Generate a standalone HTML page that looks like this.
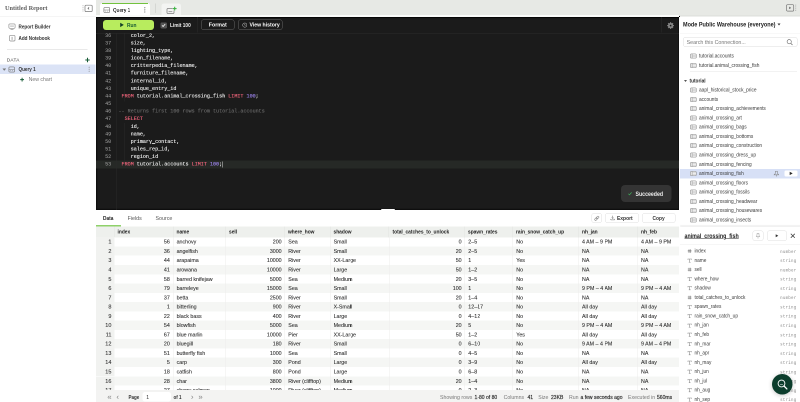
<!DOCTYPE html>
<html><head><meta charset="utf-8"><title>Untitled Report</title>
<style>
*{box-sizing:border-box;margin:0;padding:0}
html,body{width:800px;height:402px;overflow:hidden;background:#fff}
#root{position:absolute;left:0;top:0;width:800px;height:402px;zoom:2;transform:scale(.5);transform-origin:0 0}
#side,#ed,#res,#rp,#topbar,#root>.t,#root>svg{will-change:transform}
body{font-family:"Liberation Sans",sans-serif;font-size:5.2px;color:#333;position:relative}
.abs{position:absolute}
.t{position:absolute;white-space:nowrap;line-height:1}
.m{-webkit-text-stroke:0.14px;transform:scaleX(.97);transform-origin:0 50%}
.b{font-weight:bold;transform:scaleX(.87);transform-origin:0 50%}
/* sidebar */
#side{position:absolute;left:0;top:0;width:96px;height:402px;background:#fff}
#title{left:5px;top:5.2px;font-family:"Liberation Serif",serif;font-size:6.3px;color:#5e5e5e;font-weight:bold;letter-spacing:0}
/* top bar */
#topbar{position:absolute;left:96px;top:0;width:704px;height:16.6px;background:#e7e9e5;border-bottom:1px solid #dcdeda}
#tab1{position:absolute;left:100px;top:3px;width:50px;height:13.3px;background:#fff;border-radius:3px 3px 0 0}
#tab2{position:absolute;left:161.3px;top:3.6px;width:19.8px;height:12.7px;background:#f3f4f2;border-radius:2.5px 2.5px 0 0}
/* editor */
#ed{position:absolute;left:96px;top:16px;width:583.5px;height:194.2px;background:#1b1b1b;overflow:hidden;box-shadow:inset 0 2.1px 0 0 #070707,inset 0 0 0 1.2px #0e0e0e}
#edbar{position:absolute;left:0;top:0;width:584px;height:17.1px;border-bottom:0.6px solid #2c2c2c}
.btn{position:absolute;border:0.6px solid #666;border-radius:2.5px;color:#fff;font-weight:bold;font-size:5.3px;text-align:center}
.cl{position:absolute;left:0;width:584px;height:7.58px;font-family:"Liberation Mono",monospace;font-size:5.08px;line-height:7.58px;color:#f2f2f2;white-space:pre}
.cl .ln{position:absolute;left:0;width:15.2px;text-align:right;color:#a6a6a6;font-size:5.1px}
.cl .tx{position:absolute;left:22.5px;-webkit-text-stroke:0.12px}
k{color:#f4667d}
n{color:#9f86f0}
c{color:#6a6a6a}
/* results */
#res{position:absolute;left:96px;top:210.3px;width:584px;height:192px;background:#fff;overflow:hidden}
.hd{position:absolute;top:16px;height:11px;background:#eef0ed;font-weight:bold;color:#222;font-size:5.2px;line-height:11px;padding-left:3.3px;border-right:0.5px solid #e2e3e1}
.row{position:absolute;left:0;width:584px;height:9.27px;font-size:5.3px;line-height:9.27px;color:#2c2c2c;-webkit-text-stroke:0.08px}
.row.alt{background:#f5f6f4}
.row span{position:absolute;top:0;white-space:nowrap}
.vl{position:absolute;top:26.7px;width:0.5px;height:153px;background:#ececeb}
/* right panel */
#rp{border-left:1px solid #fff;position:absolute;left:679px;top:16.5px;width:121px;height:386px;background:#fff;overflow:hidden}
.ti{position:absolute;left:0;width:120px;height:9.3px;font-size:5.2px;line-height:9.3px;color:#383838}
.ti span{position:absolute;left:18.8px;top:0.2px;white-space:nowrap;transform:scaleX(.922);transform-origin:0 50%}
.ico{position:absolute;left:10.1px;top:2.2px;width:6.7px;height:5px}
.fi{position:absolute;left:0;width:120px;height:9.3px;font-size:5.1px;line-height:9.3px;color:#555}
.fi .nm{position:absolute;left:14.3px;top:0;white-space:nowrap;transform:scaleX(.93);transform-origin:0 50%;color:#3a3a3a}
.fi .ty{position:absolute;right:3.6px;top:0.8px;font-family:"Liberation Mono",monospace;font-size:4.1px;color:#8a8a8a;letter-spacing:0.25px}
.fi .ic{position:absolute;left:7.6px;top:0;font-size:4.6px;color:#888}
</style></head><body><div id="root">

<div id="side">
<div class="t" id="title">Untitled Report</div>
<svg class="abs" style="left:82px;top:4.6px" width="11" height="8" viewBox="0 0 11 8"><line x1="1" y1="0.6" x2="1" y2="7.4" stroke="#999" stroke-width="0.6" stroke-dasharray="1 0.8"/><rect x="3" y="0.7" width="7.2" height="6.4" rx="1" fill="none" stroke="#777" stroke-width="0.7"/><path d="M7.1 2.9 L6 3.9 L7.1 4.9" fill="none" stroke="#555" stroke-width="0.7"/></svg>
<div class="abs" style="left:0;top:16px;width:96px;height:0.6px;background:#ebebeb"></div>
<svg class="abs" style="left:8.6px;top:23.6px" width="7" height="6.4" viewBox="0 0 7 6.4"><rect x="0.4" y="0.4" width="6.2" height="4.4" rx="0.9" fill="none" stroke="#8a8a8a" stroke-width="0.65"/><path d="M1.6 2.6 H5.4 M2 5.8 H5" stroke="#8a8a8a" stroke-width="0.6" fill="none"/></svg>
<div class="t b" style="left:18.7px;top:24px;font-size:5.3px;color:#333">Report Builder</div>
<svg class="abs" style="left:9px;top:35px" width="6.4" height="6.4" viewBox="0 0 6.4 6.4"><rect x="0.4" y="0.4" width="5.6" height="5.6" rx="1" fill="none" stroke="#8a8a8a" stroke-width="0.65"/><path d="M2.3 2.2 H4 M2.3 3.2 H4 M2.3 4.2 H4" stroke="#999" stroke-width="0.5"/></svg>
<div class="t b" style="left:18.7px;top:35.4px;font-size:5.3px;color:#333">Add Notebook</div>
<div class="abs" style="left:7px;top:49.2px;width:80.5px;height:0.6px;background:#e9e9e9"></div>
<div class="t" style="left:6.8px;top:57.7px;font-size:4.7px;color:#444;letter-spacing:0.25px">DATA</div>
<svg class="abs" style="left:84.8px;top:57.3px" width="5" height="5" viewBox="0 0 5 5"><path d="M2.5 0.3 V4.7 M0.3 2.5 H4.7" stroke="#155a35" stroke-width="1.05"/></svg>
<div class="abs" style="left:0;top:64.3px;width:95.6px;height:9.8px;background:#dbe3f6"></div>
<svg class="abs" style="left:2.3px;top:68.3px" width="3.6" height="2.4" viewBox="0 0 3.6 2.4"><path d="M0 0 H3.6 L1.8 2.4 Z" fill="#777"/></svg>
<svg class="abs" style="left:8.6px;top:66.3px" width="6.4" height="6" viewBox="0 0 6.4 6"><rect x="0.4" y="0.4" width="5.6" height="5.2" rx="1" fill="none" stroke="#777" stroke-width="0.65"/><path d="M0.4 3 H6 M2.3 3.6 V4.6 M4.1 3.6 V4.6" stroke="#777" stroke-width="0.5"/></svg>
<div class="t b" style="left:18.6px;top:66.6px;font-size:5.3px;color:#333">Query 1</div>
<svg class="abs" style="left:88.3px;top:66.5px" width="1.4" height="5.6" viewBox="0 0 1.4 5.6"><circle cx="0.7" cy="0.8" r="0.55" fill="#808080"/><circle cx="0.7" cy="2.8" r="0.55" fill="#808080"/><circle cx="0.7" cy="4.8" r="0.55" fill="#808080"/></svg>
<svg class="abs" style="left:19.8px;top:77.3px" width="4.2" height="4.2" viewBox="0 0 4.2 4.2"><path d="M2.1 0.2 V4 M0.2 2.1 H4" stroke="#155a35" stroke-width="0.95"/></svg>
<div class="t" style="left:28.6px;top:77px;font-size:5.2px;color:#777">New chart</div>
</div>
<div id="topbar"></div>
<div id="tab1"></div>
<svg class="abs" style="left:103.6px;top:7.2px" width="6.6" height="6" viewBox="0 0 6.6 6"><rect x="0.4" y="0.4" width="5.8" height="5.2" rx="1" fill="none" stroke="#777" stroke-width="0.65"/><path d="M0.4 3 H6.2 M2.3 3.7 V4.6 M4.3 3.7 V4.6" stroke="#777" stroke-width="0.5"/></svg>
<div class="t b" style="left:113px;top:7.3px;font-size:5.3px;color:#333">Query 1</div>
<svg class="abs" style="left:144px;top:7px" width="1.4" height="5.8" viewBox="0 0 1.4 5.8"><circle cx="0.7" cy="0.8" r="0.55" fill="#666"/><circle cx="0.7" cy="2.9" r="0.55" fill="#666"/><circle cx="0.7" cy="5" r="0.55" fill="#666"/></svg>
<div class="abs" style="left:155px;top:3.6px;width:0.6px;height:9.2px;background:#c3c5c1"></div>
<div id="tab2"></div>
<svg class="abs" style="left:166.4px;top:6.3px" width="10.4" height="8" viewBox="0 0 10.4 8"><rect x="0.5" y="2" width="7" height="5" rx="1" fill="#f3f4f2" stroke="#7d7d7d" stroke-width="0.75"/><path d="M2 5.2 H5.8" stroke="#7d7d7d" stroke-width="0.7"/><path d="M8.2 0 V4.2 M6.1 2.1 H10.3" stroke="#f3f4f2" stroke-width="2"/><path d="M8.2 0.2 V4 M6.3 2.1 H10.1" stroke="#35b13c" stroke-width="1"/></svg>
<svg class="abs" style="left:786px;top:4.2px" width="11" height="8" viewBox="0 0 11 8"><rect x="0.5" y="0.7" width="7.2" height="6.4" rx="1" fill="none" stroke="#777" stroke-width="0.7"/><path d="M3.5 2.9 L4.7 3.9 L3.5 4.9 Z" fill="#555" stroke="#555" stroke-width="0.4"/><line x1="9.8" y1="0.6" x2="9.8" y2="7.4" stroke="#999" stroke-width="0.6" stroke-dasharray="1 0.8"/></svg>
<div id="ed"><div class="abs" style="left:0;top:0.4px;width:584px;height:194px">
<div id="edbar"></div>
<div class="abs" style="left:0;top:144.26px;width:584px;height:7.6px;background:#262926"></div>
<div class="abs" style="left:20.3px;top:16.5px;width:0.5px;height:178px;background:#2a2a2a"></div>
<div class="abs" style="left:27.8px;top:17px;width:0.5px;height:68px;background:#2a2a2a"></div>
<div class="abs" style="left:27.8px;top:106.36px;width:0.5px;height:37.90px;background:#2a2a2a"></div>
<div class="abs" style="left:6.9px;top:3.5px;width:51.2px;height:10.3px;background:#b8ec5e;border-radius:3px"></div>
<svg class="abs" style="left:24.2px;top:6.2px" width="4" height="4.8" viewBox="0 0 4 4.8"><path d="M0.2 0.2 L3.8 2.4 L0.2 4.6 Z" fill="#123f28"/></svg>
<div class="t b" style="left:31px;top:6.1px;font-size:5.6px;color:#175a34">Run</div>
<div class="abs" style="left:64.3px;top:5.9px;width:6.5px;height:6.3px;background:#555;border-radius:1.2px"></div>
<svg class="abs" style="left:65.5px;top:7.2px" width="4.2" height="3.6" viewBox="0 0 4.2 3.6"><path d="M0.5 1.9 L1.6 3 L3.7 0.6" fill="none" stroke="#fff" stroke-width="0.8"/></svg>
<div class="t b" style="left:74px;top:6.3px;font-size:5.5px;color:#eee">Limit 100</div>
<div class="abs" style="left:101px;top:0;width:0.6px;height:16px;background:#2c2c2c"></div>
<div class="btn" style="left:105px;top:3.2px;width:33.5px;height:10.6px;line-height:9.6px">Format</div>
<div class="btn" style="left:142.2px;top:3.2px;width:44.5px;height:10.6px;line-height:9.6px;text-align:left;padding-left:10.8px;font-size:5.15px">View history</div>
<svg class="abs" style="left:146px;top:6.2px" width="5.2" height="5.2" viewBox="0 0 5.2 5.2"><circle cx="2.8" cy="2.6" r="2.1" fill="none" stroke="#bbb" stroke-width="0.55"/><path d="M2.8 1.4 V2.7 H3.7" fill="none" stroke="#bbb" stroke-width="0.5"/></svg>
<div class="abs" style="left:565.5px;top:0;width:0.6px;height:16px;background:#2c2c2c"></div>
<svg class="abs" style="left:570.8px;top:5.5px" width="7.2" height="7.2" viewBox="0 0 7.2 7.2"><path d="M7.06 3.05 L7.06 4.15 L6.23 4.23 L5.90 5.01 L6.43 5.66 L5.66 6.43 L5.01 5.90 L4.23 6.23 L4.15 7.06 L3.05 7.06 L2.97 6.23 L2.19 5.90 L1.54 6.43 L0.77 5.66 L1.30 5.01 L0.97 4.23 L0.14 4.15 L0.14 3.05 L0.97 2.97 L1.30 2.19 L0.77 1.54 L1.54 0.77 L2.19 1.30 L2.97 0.97 L3.05 0.14 L4.15 0.14 L4.23 0.97 L5.01 1.30 L5.66 0.77 L6.43 1.54 L5.90 2.19 L6.23 2.97 Z" fill="#7d7d7d"/><circle cx="3.6" cy="3.6" r="1.9" fill="none" stroke="#999" stroke-width="0.4"/><circle cx="3.6" cy="3.6" r="0.8" fill="#1b1b1b"/></svg>
<div class="cl" style="top:15.40px"><span class="ln">36</span><span class="tx">    color_2,</span></div>
<div class="cl" style="top:22.98px"><span class="ln">37</span><span class="tx">    size,</span></div>
<div class="cl" style="top:30.56px"><span class="ln">38</span><span class="tx">    lighting_type,</span></div>
<div class="cl" style="top:38.14px"><span class="ln">39</span><span class="tx">    icon_filename,</span></div>
<div class="cl" style="top:45.72px"><span class="ln">40</span><span class="tx">    critterpedia_filename,</span></div>
<div class="cl" style="top:53.30px"><span class="ln">41</span><span class="tx">    furniture_filename,</span></div>
<div class="cl" style="top:60.88px"><span class="ln">42</span><span class="tx">    internal_id,</span></div>
<div class="cl" style="top:68.46px"><span class="ln">43</span><span class="tx">    unique_entry_id</span></div>
<div class="cl" style="top:76.04px"><span class="ln">44</span><span class="tx"> <k>FROM</k> tutorial.animal_crossing_fish <k>LIMIT</k> <n>100</n>;</span></div>
<div class="cl" style="top:83.62px"><span class="ln">45</span><span class="tx"></span></div>
<div class="cl" style="top:91.20px"><span class="ln">46</span><span class="tx"><c>-- Returns first 100 rows from tutorial.accounts</c></span></div>
<div class="cl" style="top:98.78px"><span class="ln">47</span><span class="tx">  <k>SELECT</k></span></div>
<div class="cl" style="top:106.36px"><span class="ln">48</span><span class="tx">    id,</span></div>
<div class="cl" style="top:113.94px"><span class="ln">49</span><span class="tx">    name,</span></div>
<div class="cl" style="top:121.52px"><span class="ln">50</span><span class="tx">    primary_contact,</span></div>
<div class="cl" style="top:129.10px"><span class="ln">51</span><span class="tx">    sales_rep_id,</span></div>
<div class="cl" style="top:136.68px"><span class="ln">52</span><span class="tx">    region_id</span></div>
<div class="cl" style="top:144.26px"><span class="ln">53</span><span class="tx"> <k>FROM</k> tutorial.accounts <k>LIMIT</k> <n>100</n>;</span></div>
<div class="abs" style="left:126.4px;top:144.96px;width:0.6px;height:6.2px;background:#ddd"></div>
<div class="abs" style="left:525px;top:168.8px;width:50.5px;height:16.8px;background:#343434;border-radius:4px"></div>
<svg class="abs" style="left:532px;top:175.6px" width="4" height="3.4" viewBox="0 0 4 3.4"><path d="M0.4 1.8 L1.5 2.9 L3.6 0.4" fill="none" stroke="#3fae5a" stroke-width="0.7"/></svg>
<div class="t b" style="left:539.6px;top:174.4px;font-size:6px;color:#eee">Succeeded</div>
<div class="abs" style="left:285px;top:192.6px;width:14px;height:1.6px;background:#fff;border-radius:1px 1px 0 0"></div>
</div></div>
<div class="abs" style="left:96px;top:15px;width:583px;height:1.25px;background:#fafbf9"></div>
<div class="abs" style="left:101.8px;top:2.9px;width:46.4px;height:1.1px;background:#72c23e"></div>
<div id="res">
<div class="t b" style="left:7px;top:5.1px;font-size:5.5px;color:#222">Data</div>
<div class="t" style="left:31.6px;top:5.1px;font-size:5.3px;color:#555">Fields</div>
<div class="t" style="left:59.5px;top:5.1px;font-size:5.3px;color:#555">Source</div>
<div class="abs" style="left:0;top:14.6px;width:25px;height:1.5px;background:#8fd16a"></div>
<div class="abs" style="left:495.4px;top:2.5px;width:10.6px;height:10px;border:0.6px solid #dedede;border-radius:2.5px"></div>
<svg class="abs" style="left:497.8px;top:4.8px" width="5.6" height="5.6" viewBox="0 0 5.6 5.6"><g transform="rotate(-45 2.8 2.8)" fill="none" stroke="#8c8c8c" stroke-width="0.6"><rect x="0.2" y="1.9" width="3" height="1.8" rx="0.9"/><rect x="2.4" y="1.9" width="3" height="1.8" rx="0.9"/></g></svg>
<div class="abs" style="left:509.2px;top:2.5px;width:33.6px;height:10px;border:0.6px solid #dedede;border-radius:2.5px"></div>
<svg class="abs" style="left:514.6px;top:5.2px" width="4.4" height="4.8" viewBox="0 0 4.4 4.8"><path d="M2.2 0.2 V3 M1.1 2 L2.2 3.1 L3.3 2 M0.3 3.4 V4.4 H4.1 V3.4" fill="none" stroke="#666" stroke-width="0.5"/></svg>
<div class="t b" style="left:521px;top:5.2px;font-size:5.7px;color:#333">Export</div>
<div class="abs" style="left:546px;top:2.5px;width:33.6px;height:10px;border:0.6px solid #dedede;border-radius:2.5px"></div>
<div class="t b" style="left:556.6px;top:5.2px;font-size:5.6px;color:#333">Copy</div>
<div class="hd" style="left:0.0px;width:18.4px"><span style="display:inline-block;transform:scaleX(.935);transform-origin:0 50%;white-space:nowrap"></span></div>
<div class="hd" style="left:18.4px;width:58.9px"><span style="display:inline-block;transform:scaleX(.935);transform-origin:0 50%;white-space:nowrap">index</span></div>
<div class="hd" style="left:77.3px;width:52.3px"><span style="display:inline-block;transform:scaleX(.935);transform-origin:0 50%;white-space:nowrap">name</span></div>
<div class="hd" style="left:129.6px;width:59.0px"><span style="display:inline-block;transform:scaleX(.935);transform-origin:0 50%;white-space:nowrap">sell</span></div>
<div class="hd" style="left:188.6px;width:45.7px"><span style="display:inline-block;transform:scaleX(.935);transform-origin:0 50%;white-space:nowrap">where_how</span></div>
<div class="hd" style="left:234.3px;width:58.9px"><span style="display:inline-block;transform:scaleX(.935);transform-origin:0 50%;white-space:nowrap">shadow</span></div>
<div class="hd" style="left:293.2px;width:75.4px"><span style="display:inline-block;transform:scaleX(.935);transform-origin:0 50%;white-space:nowrap">total_catches_to_unlock</span></div>
<div class="hd" style="left:368.6px;width:48.2px"><span style="display:inline-block;transform:scaleX(.935);transform-origin:0 50%;white-space:nowrap">spawn_rates</span></div>
<div class="hd" style="left:416.8px;width:65.8px"><span style="display:inline-block;transform:scaleX(.935);transform-origin:0 50%;white-space:nowrap">rain_snow_catch_up</span></div>
<div class="hd" style="left:482.6px;width:59.0px"><span style="display:inline-block;transform:scaleX(.935);transform-origin:0 50%;white-space:nowrap">nh_jan</span></div>
<div class="hd" style="left:541.6px;width:58.4px"><span style="display:inline-block;transform:scaleX(.935);transform-origin:0 50%;white-space:nowrap">nh_feb</span></div>
<div class="row" style="top:26.70px"><div class="abs" style="left:0;top:0;width:18.4px;height:9.27px;background:#f1f2f0"></div><span style="right:568.6px;color:#2e2e2e;font-size:5.5px">1</span><span style="right:510.2px">56</span><span style="left:80.6px">anchovy</span><span style="right:398.4px">200</span><span style="left:192.3px">Sea</span><span style="left:237.6px">Small</span><span style="right:218.4px">0</span><span style="left:372.3px">2–5</span><span style="left:420.3px">No</span><span style="left:486px">4 AM – 9 PM</span><span style="left:545px">4 AM – 9 PM</span></div>
<div class="row alt" style="top:35.97px"><div class="abs" style="left:0;top:0;width:18.4px;height:9.27px;background:#f1f2f0"></div><span style="right:568.6px;color:#2e2e2e;font-size:5.5px">2</span><span style="right:510.2px">36</span><span style="left:80.6px">angelfish</span><span style="right:398.4px">3000</span><span style="left:192.3px">River</span><span style="left:237.6px">Small</span><span style="right:218.4px">20</span><span style="left:372.3px">2–5</span><span style="left:420.3px">No</span><span style="left:486px">NA</span><span style="left:545px">NA</span></div>
<div class="row" style="top:45.24px"><div class="abs" style="left:0;top:0;width:18.4px;height:9.27px;background:#f1f2f0"></div><span style="right:568.6px;color:#2e2e2e;font-size:5.5px">3</span><span style="right:510.2px">44</span><span style="left:80.6px">arapaima</span><span style="right:398.4px">10000</span><span style="left:192.3px">River</span><span style="left:237.6px">XX-Large</span><span style="right:218.4px">50</span><span style="left:372.3px">1</span><span style="left:420.3px">Yes</span><span style="left:486px">NA</span><span style="left:545px">NA</span></div>
<div class="row alt" style="top:54.51px"><div class="abs" style="left:0;top:0;width:18.4px;height:9.27px;background:#f1f2f0"></div><span style="right:568.6px;color:#2e2e2e;font-size:5.5px">4</span><span style="right:510.2px">41</span><span style="left:80.6px">arowana</span><span style="right:398.4px">10000</span><span style="left:192.3px">River</span><span style="left:237.6px">Large</span><span style="right:218.4px">50</span><span style="left:372.3px">1–2</span><span style="left:420.3px">No</span><span style="left:486px">NA</span><span style="left:545px">NA</span></div>
<div class="row" style="top:63.78px"><div class="abs" style="left:0;top:0;width:18.4px;height:9.27px;background:#f1f2f0"></div><span style="right:568.6px;color:#2e2e2e;font-size:5.5px">5</span><span style="right:510.2px">58</span><span style="left:80.6px">barred knifejaw</span><span style="right:398.4px">5000</span><span style="left:192.3px">Sea</span><span style="left:237.6px">Medium</span><span style="right:218.4px">20</span><span style="left:372.3px">3–5</span><span style="left:420.3px">No</span><span style="left:486px">NA</span><span style="left:545px">NA</span></div>
<div class="row alt" style="top:73.05px"><div class="abs" style="left:0;top:0;width:18.4px;height:9.27px;background:#f1f2f0"></div><span style="right:568.6px;color:#2e2e2e;font-size:5.5px">6</span><span style="right:510.2px">79</span><span style="left:80.6px">barreleye</span><span style="right:398.4px">15000</span><span style="left:192.3px">Sea</span><span style="left:237.6px">Small</span><span style="right:218.4px">100</span><span style="left:372.3px">1</span><span style="left:420.3px">No</span><span style="left:486px">9 PM – 4 AM</span><span style="left:545px">9 PM – 4 AM</span></div>
<div class="row" style="top:82.32px"><div class="abs" style="left:0;top:0;width:18.4px;height:9.27px;background:#f1f2f0"></div><span style="right:568.6px;color:#2e2e2e;font-size:5.5px">7</span><span style="right:510.2px">37</span><span style="left:80.6px">betta</span><span style="right:398.4px">2500</span><span style="left:192.3px">River</span><span style="left:237.6px">Small</span><span style="right:218.4px">20</span><span style="left:372.3px">1–4</span><span style="left:420.3px">No</span><span style="left:486px">NA</span><span style="left:545px">NA</span></div>
<div class="row alt" style="top:91.59px"><div class="abs" style="left:0;top:0;width:18.4px;height:9.27px;background:#f1f2f0"></div><span style="right:568.6px;color:#2e2e2e;font-size:5.5px">8</span><span style="right:510.2px">1</span><span style="left:80.6px">bitterling</span><span style="right:398.4px">900</span><span style="left:192.3px">River</span><span style="left:237.6px">X-Small</span><span style="right:218.4px">0</span><span style="left:372.3px">12–17</span><span style="left:420.3px">No</span><span style="left:486px">All day</span><span style="left:545px">All day</span></div>
<div class="row" style="top:100.86px"><div class="abs" style="left:0;top:0;width:18.4px;height:9.27px;background:#f1f2f0"></div><span style="right:568.6px;color:#2e2e2e;font-size:5.5px">9</span><span style="right:510.2px">22</span><span style="left:80.6px">black bass</span><span style="right:398.4px">400</span><span style="left:192.3px">River</span><span style="left:237.6px">Large</span><span style="right:218.4px">0</span><span style="left:372.3px">4–12</span><span style="left:420.3px">No</span><span style="left:486px">All day</span><span style="left:545px">All day</span></div>
<div class="row alt" style="top:110.13px"><div class="abs" style="left:0;top:0;width:18.4px;height:9.27px;background:#f1f2f0"></div><span style="right:568.6px;color:#2e2e2e;font-size:5.5px">10</span><span style="right:510.2px">54</span><span style="left:80.6px">blowfish</span><span style="right:398.4px">5000</span><span style="left:192.3px">Sea</span><span style="left:237.6px">Medium</span><span style="right:218.4px">20</span><span style="left:372.3px">5</span><span style="left:420.3px">No</span><span style="left:486px">9 PM – 4 AM</span><span style="left:545px">9 PM – 4 AM</span></div>
<div class="row" style="top:119.40px"><div class="abs" style="left:0;top:0;width:18.4px;height:9.27px;background:#f1f2f0"></div><span style="right:568.6px;color:#2e2e2e;font-size:5.5px">11</span><span style="right:510.2px">67</span><span style="left:80.6px">blue marlin</span><span style="right:398.4px">10000</span><span style="left:192.3px">Pier</span><span style="left:237.6px">XX-Large</span><span style="right:218.4px">50</span><span style="left:372.3px">1–2</span><span style="left:420.3px">Yes</span><span style="left:486px">All day</span><span style="left:545px">All day</span></div>
<div class="row alt" style="top:128.67px"><div class="abs" style="left:0;top:0;width:18.4px;height:9.27px;background:#f1f2f0"></div><span style="right:568.6px;color:#2e2e2e;font-size:5.5px">12</span><span style="right:510.2px">20</span><span style="left:80.6px">bluegill</span><span style="right:398.4px">180</span><span style="left:192.3px">River</span><span style="left:237.6px">Small</span><span style="right:218.4px">0</span><span style="left:372.3px">6–10</span><span style="left:420.3px">No</span><span style="left:486px">9 AM – 4 PM</span><span style="left:545px">9 AM – 4 PM</span></div>
<div class="row" style="top:137.94px"><div class="abs" style="left:0;top:0;width:18.4px;height:9.27px;background:#f1f2f0"></div><span style="right:568.6px;color:#2e2e2e;font-size:5.5px">13</span><span style="right:510.2px">51</span><span style="left:80.6px">butterfly fish</span><span style="right:398.4px">1000</span><span style="left:192.3px">Sea</span><span style="left:237.6px">Small</span><span style="right:218.4px">0</span><span style="left:372.3px">4–5</span><span style="left:420.3px">No</span><span style="left:486px">NA</span><span style="left:545px">NA</span></div>
<div class="row alt" style="top:147.21px"><div class="abs" style="left:0;top:0;width:18.4px;height:9.27px;background:#f1f2f0"></div><span style="right:568.6px;color:#2e2e2e;font-size:5.5px">14</span><span style="right:510.2px">5</span><span style="left:80.6px">carp</span><span style="right:398.4px">300</span><span style="left:192.3px">Pond</span><span style="left:237.6px">Large</span><span style="right:218.4px">0</span><span style="left:372.3px">3–9</span><span style="left:420.3px">No</span><span style="left:486px">All day</span><span style="left:545px">All day</span></div>
<div class="row" style="top:156.48px"><div class="abs" style="left:0;top:0;width:18.4px;height:9.27px;background:#f1f2f0"></div><span style="right:568.6px;color:#2e2e2e;font-size:5.5px">15</span><span style="right:510.2px">18</span><span style="left:80.6px">catfish</span><span style="right:398.4px">800</span><span style="left:192.3px">Pond</span><span style="left:237.6px">Large</span><span style="right:218.4px">0</span><span style="left:372.3px">6–8</span><span style="left:420.3px">No</span><span style="left:486px">NA</span><span style="left:545px">NA</span></div>
<div class="row alt" style="top:165.75px"><div class="abs" style="left:0;top:0;width:18.4px;height:9.27px;background:#f1f2f0"></div><span style="right:568.6px;color:#2e2e2e;font-size:5.5px">16</span><span style="right:510.2px">28</span><span style="left:80.6px">char</span><span style="right:398.4px">3800</span><span style="left:192.3px">River (clifftop)</span><span style="left:237.6px">Medium</span><span style="right:218.4px">20</span><span style="left:372.3px">1–4</span><span style="left:420.3px">No</span><span style="left:486px">NA</span><span style="left:545px">NA</span></div>
<div class="row" style="top:175.02px"><div class="abs" style="left:0;top:0;width:18.4px;height:9.27px;background:#f1f2f0"></div><span style="right:568.6px;color:#2e2e2e;font-size:5.5px">17</span><span style="right:510.2px">27</span><span style="left:80.6px">cherry salmon</span><span style="right:398.4px">1000</span><span style="left:192.3px">River (clifftop)</span><span style="left:237.6px">Medium</span><span style="right:218.4px">0</span><span style="left:372.3px">2–3</span><span style="left:420.3px">No</span><span style="left:486px">NA</span><span style="left:545px">NA</span></div>
<div class="vl" style="left:77.0px"></div>
<div class="vl" style="left:129.3px"></div>
<div class="vl" style="left:188.3px"></div>
<div class="vl" style="left:234.0px"></div>
<div class="vl" style="left:292.9px"></div>
<div class="vl" style="left:368.3px"></div>
<div class="vl" style="left:416.5px"></div>
<div class="vl" style="left:482.3px"></div>
<div class="vl" style="left:541.3px"></div>
<div class="vl" style="left:599.7px"></div>
<div class="abs" style="left:0;top:179.3px;width:584px;height:14px;background:#f3f3f2"></div>
<svg class="abs" style="left:11.6px;top:184.9px" width="4" height="3.6" viewBox="0 0 4 3.6"><path d="M1.8 0.3 L0.4 1.8 L1.8 3.3 M3.6 0.3 L2.2 1.8 L3.6 3.3" fill="none" stroke="#858585" stroke-width="0.6"/></svg>
<svg class="abs" style="left:20.6px;top:184.9px" width="2.4" height="3.6" viewBox="0 0 2.4 3.6"><path d="M1.9 0.3 L0.5 1.8 L1.9 3.3" fill="none" stroke="#858585" stroke-width="0.6"/></svg>
<div class="t b" style="left:32.6px;top:184.5px;font-size:5.2px;color:#333">Page</div>
<div class="abs" style="left:46.3px;top:181.6px;width:28.6px;height:9.4px;background:#fff;border-radius:2.5px"></div>
<div class="t" style="left:50.3px;top:184.5px;font-size:5.2px;color:#333">1</div>
<div class="t b" style="left:77.6px;top:184.5px;font-size:5.2px;color:#333">of 1</div>
<svg class="abs" style="left:95px;top:184.9px" width="2.4" height="3.6" viewBox="0 0 2.4 3.6"><path d="M0.5 0.3 L1.9 1.8 L0.5 3.3" fill="none" stroke="#858585" stroke-width="0.6"/></svg>
<svg class="abs" style="left:102.6px;top:184.9px" width="4" height="3.6" viewBox="0 0 4 3.6"><path d="M0.4 0.3 L1.8 1.8 L0.4 3.3 M2.2 0.3 L3.6 1.8 L2.2 3.3" fill="none" stroke="#858585" stroke-width="0.6"/></svg>
<div class="t" style="left:344px;top:184.5px;font-size:5.2px;color:#777">Showing rows</div>
<div class="t m" style="left:378.3px;top:184.5px;font-size:5.2px;color:#222">1-80 of 80</div>
<div class="t" style="left:407.6px;top:184.5px;font-size:5.2px;color:#777">Columns</div>
<div class="t m" style="left:431.3px;top:184.5px;font-size:5.2px;color:#222">41</div>
<div class="t" style="left:442.3px;top:184.5px;font-size:5.2px;color:#777">Size</div>
<div class="t m" style="left:455px;top:184.5px;font-size:5.2px;color:#222">23KB</div>
<div class="t" style="left:473px;top:184.5px;font-size:5.2px;color:#777">Run</div>
<div class="t m" style="left:484.6px;top:184.5px;font-size:5.2px;color:#222">a few seconds ago</div>
<div class="t" style="left:532px;top:184.5px;font-size:5.2px;color:#777">Executed in</div>
<div class="t m" style="left:561px;top:184.5px;font-size:5.2px;color:#222">560ms</div>
</div>
<div id="rp">
<div class="t b" style="left:3px;top:5.2px;font-size:6.1px;color:#222;transform:scaleX(.9)">Mode Public Warehouse (everyone)</div>
<svg class="abs" style="left:97.3px;top:7.2px" width="3" height="2" viewBox="0 0 3 2"><path d="M0 0 H3 L1.5 2 Z" fill="#333"/></svg>
<div class="abs" style="left:0;top:16.8px;width:120px;height:0.5px;background:#f0f0f0"></div>
<div class="abs" style="left:3.2px;top:20.4px;width:114.3px;height:10.2px;border:0.6px solid #dcdcdc;border-radius:2.5px"></div>
<div class="t" style="left:6.6px;top:23.2px;font-size:5.3px;color:#777">Search this Connection...</div>
<svg class="abs" style="left:106.6px;top:22.6px" width="6.4" height="6.4" viewBox="0 0 6.4 6.4"><circle cx="2.7" cy="2.7" r="2.1" fill="none" stroke="#666" stroke-width="0.6"/><path d="M4.2 4.2 L6 6" stroke="#666" stroke-width="0.7"/></svg>
<div class="ti" style="top:34.85px"><svg class="ico" viewBox="0 0 6.7 5"><rect x="0.35" y="0.35" width="6" height="4.3" rx="1.2" fill="#f1f1f1" stroke="#8c8c8c" stroke-width="0.55"/><path d="M2.1 0.4 V4.6" stroke="#8c8c8c" stroke-width="0.5"/><path d="M2.2 1.8 H6.2 M2.2 3.2 H6.2" stroke="#b5b5b5" stroke-width="0.4"/></svg><span>tutorial.accounts</span></div>
<div class="ti" style="top:44.35px"><svg class="ico" viewBox="0 0 6.7 5"><rect x="0.35" y="0.35" width="6" height="4.3" rx="1.2" fill="#f1f1f1" stroke="#8c8c8c" stroke-width="0.55"/><path d="M2.1 0.4 V4.6" stroke="#8c8c8c" stroke-width="0.5"/><path d="M2.2 1.8 H6.2 M2.2 3.2 H6.2" stroke="#b5b5b5" stroke-width="0.4"/></svg><span>tutorial.animal_crossing_fish</span></div>
<div class="abs" style="left:10px;top:55.2px;width:107px;height:0.5px;background:#e4e4e4"></div>
<svg class="abs" style="left:3.8px;top:63.3px" width="3" height="2" viewBox="0 0 3 2"><path d="M0 0 H3 L1.5 2 Z" fill="#555"/></svg>
<div class="t b" style="left:9.6px;top:61.4px;font-size:5.45px;color:#2a2a2a">tutorial</div>
<div class="ti" style="top:68.85px"><svg class="ico" viewBox="0 0 6.7 5"><rect x="0.35" y="0.35" width="6" height="4.3" rx="1.2" fill="#f1f1f1" stroke="#8c8c8c" stroke-width="0.55"/><path d="M2.1 0.4 V4.6" stroke="#8c8c8c" stroke-width="0.5"/><path d="M2.2 1.8 H6.2 M2.2 3.2 H6.2" stroke="#b5b5b5" stroke-width="0.4"/></svg><span>aapl_historical_stock_price</span></div>
<div class="ti" style="top:78.13px"><svg class="ico" viewBox="0 0 6.7 5"><rect x="0.35" y="0.35" width="6" height="4.3" rx="1.2" fill="#f1f1f1" stroke="#8c8c8c" stroke-width="0.55"/><path d="M2.1 0.4 V4.6" stroke="#8c8c8c" stroke-width="0.5"/><path d="M2.2 1.8 H6.2 M2.2 3.2 H6.2" stroke="#b5b5b5" stroke-width="0.4"/></svg><span>accounts</span></div>
<div class="ti" style="top:87.41px"><svg class="ico" viewBox="0 0 6.7 5"><rect x="0.35" y="0.35" width="6" height="4.3" rx="1.2" fill="#f1f1f1" stroke="#8c8c8c" stroke-width="0.55"/><path d="M2.1 0.4 V4.6" stroke="#8c8c8c" stroke-width="0.5"/><path d="M2.2 1.8 H6.2 M2.2 3.2 H6.2" stroke="#b5b5b5" stroke-width="0.4"/></svg><span>animal_crossing_achievements</span></div>
<div class="ti" style="top:96.69px"><svg class="ico" viewBox="0 0 6.7 5"><rect x="0.35" y="0.35" width="6" height="4.3" rx="1.2" fill="#f1f1f1" stroke="#8c8c8c" stroke-width="0.55"/><path d="M2.1 0.4 V4.6" stroke="#8c8c8c" stroke-width="0.5"/><path d="M2.2 1.8 H6.2 M2.2 3.2 H6.2" stroke="#b5b5b5" stroke-width="0.4"/></svg><span>animal_crossing_art</span></div>
<div class="ti" style="top:105.97px"><svg class="ico" viewBox="0 0 6.7 5"><rect x="0.35" y="0.35" width="6" height="4.3" rx="1.2" fill="#f1f1f1" stroke="#8c8c8c" stroke-width="0.55"/><path d="M2.1 0.4 V4.6" stroke="#8c8c8c" stroke-width="0.5"/><path d="M2.2 1.8 H6.2 M2.2 3.2 H6.2" stroke="#b5b5b5" stroke-width="0.4"/></svg><span>animal_crossing_bags</span></div>
<div class="ti" style="top:115.25px"><svg class="ico" viewBox="0 0 6.7 5"><rect x="0.35" y="0.35" width="6" height="4.3" rx="1.2" fill="#f1f1f1" stroke="#8c8c8c" stroke-width="0.55"/><path d="M2.1 0.4 V4.6" stroke="#8c8c8c" stroke-width="0.5"/><path d="M2.2 1.8 H6.2 M2.2 3.2 H6.2" stroke="#b5b5b5" stroke-width="0.4"/></svg><span>animal_crossing_bottoms</span></div>
<div class="ti" style="top:124.53px"><svg class="ico" viewBox="0 0 6.7 5"><rect x="0.35" y="0.35" width="6" height="4.3" rx="1.2" fill="#f1f1f1" stroke="#8c8c8c" stroke-width="0.55"/><path d="M2.1 0.4 V4.6" stroke="#8c8c8c" stroke-width="0.5"/><path d="M2.2 1.8 H6.2 M2.2 3.2 H6.2" stroke="#b5b5b5" stroke-width="0.4"/></svg><span>animal_crossing_construction</span></div>
<div class="ti" style="top:133.81px"><svg class="ico" viewBox="0 0 6.7 5"><rect x="0.35" y="0.35" width="6" height="4.3" rx="1.2" fill="#f1f1f1" stroke="#8c8c8c" stroke-width="0.55"/><path d="M2.1 0.4 V4.6" stroke="#8c8c8c" stroke-width="0.5"/><path d="M2.2 1.8 H6.2 M2.2 3.2 H6.2" stroke="#b5b5b5" stroke-width="0.4"/></svg><span>animal_crossing_dress_up</span></div>
<div class="ti" style="top:143.09px"><svg class="ico" viewBox="0 0 6.7 5"><rect x="0.35" y="0.35" width="6" height="4.3" rx="1.2" fill="#f1f1f1" stroke="#8c8c8c" stroke-width="0.55"/><path d="M2.1 0.4 V4.6" stroke="#8c8c8c" stroke-width="0.5"/><path d="M2.2 1.8 H6.2 M2.2 3.2 H6.2" stroke="#b5b5b5" stroke-width="0.4"/></svg><span>animal_crossing_fencing</span></div>
<div class="abs" style="left:0;top:152.37px;width:120px;height:9.4px;background:#d7e0f6"></div>
<svg class="abs" style="left:93.4px;top:154.27px" width="5.8" height="5.8" viewBox="0 0 5.8 5.8"><path d="M1.8 0.4 H4 V2.4 L5.2 3.8 H0.6 L1.8 2.4 Z M2.9 3.8 V5.6" fill="none" stroke="#808080" stroke-width="0.55"/></svg>
<div class="abs" style="left:104.4px;top:153.97px;width:13px;height:6.2px;background:#fff;border-radius:1.5px"></div>
<svg class="abs" style="left:109.4px;top:155.17px" width="3.4" height="3.8" viewBox="0 0 3.4 3.8"><path d="M0.2 0.2 L3.2 1.9 L0.2 3.6 Z" fill="#2a2a2a"/></svg>
<div class="ti" style="top:152.37px"><svg class="ico" viewBox="0 0 6.7 5"><rect x="0.35" y="0.35" width="6" height="4.3" rx="1.2" fill="#f1f1f1" stroke="#8c8c8c" stroke-width="0.55"/><path d="M2.1 0.4 V4.6" stroke="#8c8c8c" stroke-width="0.5"/><path d="M2.2 1.8 H6.2 M2.2 3.2 H6.2" stroke="#b5b5b5" stroke-width="0.4"/></svg><span>animal_crossing_fish</span></div>
<div class="ti" style="top:161.65px"><svg class="ico" viewBox="0 0 6.7 5"><rect x="0.35" y="0.35" width="6" height="4.3" rx="1.2" fill="#f1f1f1" stroke="#8c8c8c" stroke-width="0.55"/><path d="M2.1 0.4 V4.6" stroke="#8c8c8c" stroke-width="0.5"/><path d="M2.2 1.8 H6.2 M2.2 3.2 H6.2" stroke="#b5b5b5" stroke-width="0.4"/></svg><span>animal_crossing_floors</span></div>
<div class="ti" style="top:170.93px"><svg class="ico" viewBox="0 0 6.7 5"><rect x="0.35" y="0.35" width="6" height="4.3" rx="1.2" fill="#f1f1f1" stroke="#8c8c8c" stroke-width="0.55"/><path d="M2.1 0.4 V4.6" stroke="#8c8c8c" stroke-width="0.5"/><path d="M2.2 1.8 H6.2 M2.2 3.2 H6.2" stroke="#b5b5b5" stroke-width="0.4"/></svg><span>animal_crossing_fossils</span></div>
<div class="ti" style="top:180.21px"><svg class="ico" viewBox="0 0 6.7 5"><rect x="0.35" y="0.35" width="6" height="4.3" rx="1.2" fill="#f1f1f1" stroke="#8c8c8c" stroke-width="0.55"/><path d="M2.1 0.4 V4.6" stroke="#8c8c8c" stroke-width="0.5"/><path d="M2.2 1.8 H6.2 M2.2 3.2 H6.2" stroke="#b5b5b5" stroke-width="0.4"/></svg><span>animal_crossing_headwear</span></div>
<div class="ti" style="top:189.49px"><svg class="ico" viewBox="0 0 6.7 5"><rect x="0.35" y="0.35" width="6" height="4.3" rx="1.2" fill="#f1f1f1" stroke="#8c8c8c" stroke-width="0.55"/><path d="M2.1 0.4 V4.6" stroke="#8c8c8c" stroke-width="0.5"/><path d="M2.2 1.8 H6.2 M2.2 3.2 H6.2" stroke="#b5b5b5" stroke-width="0.4"/></svg><span>animal_crossing_housewares</span></div>
<div class="ti" style="top:198.77px"><svg class="ico" viewBox="0 0 6.7 5"><rect x="0.35" y="0.35" width="6" height="4.3" rx="1.2" fill="#f1f1f1" stroke="#8c8c8c" stroke-width="0.55"/><path d="M2.1 0.4 V4.6" stroke="#8c8c8c" stroke-width="0.5"/><path d="M2.2 1.8 H6.2 M2.2 3.2 H6.2" stroke="#b5b5b5" stroke-width="0.4"/></svg><span>animal_crossing_insects</span></div>
<div class="ti" style="top:208.05px"><svg class="ico" viewBox="0 0 6.7 5"><rect x="0.35" y="0.35" width="6" height="4.3" rx="1.2" fill="#f1f1f1" stroke="#8c8c8c" stroke-width="0.55"/><path d="M2.1 0.4 V4.6" stroke="#8c8c8c" stroke-width="0.5"/><path d="M2.2 1.8 H6.2 M2.2 3.2 H6.2" stroke="#b5b5b5" stroke-width="0.4"/></svg><span>animal_crossing_miscellaneous</span></div>
<div class="abs" style="left:0;top:210px;width:121px;height:180px;background:#fff;box-shadow:0 -0.6px 1.6px rgba(0,0,0,0.18)"></div>
<div class="t b" style="left:4.6px;top:216.6px;font-size:6.1px;color:#222;text-decoration:underline">animal_crossing_fish</div>
<div class="abs" style="left:72.6px;top:214.2px;width:11px;height:10.2px;border:0.6px solid #dedede;border-radius:2.5px"></div>
<svg class="abs" style="left:75.6px;top:216.4px" width="5" height="5.8" viewBox="0 0 5 5.8"><path d="M1.5 0.4 H3.5 V2.4 L4.4 3.6 H0.6 L1.5 2.4 Z M2.5 3.6 V5.6" fill="none" stroke="#999" stroke-width="0.5"/></svg>
<div class="abs" style="left:87px;top:214.2px;width:20px;height:10.2px;border:0.6px solid #dedede;border-radius:2.5px"></div>
<svg class="abs" style="left:95.4px;top:217.6px" width="3" height="3.4" viewBox="0 0 3 3.4"><path d="M0.2 0.2 L2.8 1.7 L0.2 3.2 Z" fill="#333"/></svg>
<svg class="abs" style="left:110.3px;top:217px" width="4.6" height="4.6" viewBox="0 0 4.6 4.6"><path d="M0.3 0.3 L4.3 4.3 M4.3 0.3 L0.3 4.3" stroke="#333" stroke-width="0.7"/></svg>
<div class="abs" style="left:0;top:227.8px;width:120px;height:0.5px;background:#ededed"></div>
<div class="fi" style="top:230.05px"><svg class="abs" style="left:7.4px;top:2.5px" width="4.2" height="4.2" viewBox="0 0 4.2 4.2"><path d="M1.5 0.3 V3.9 M2.8 0.3 V3.9 M0.3 1.5 H3.9 M0.3 2.8 H3.9" stroke="#8a8a8a" stroke-width="0.65"/></svg><span class="nm">index</span><span class="ty">number</span></div>
<div class="fi" style="top:239.32px"><svg class="abs" style="left:7.4px;top:2.6px" width="4.4" height="4.2" viewBox="0 0 4.4 4.2"><path d="M0.4 1.2 V0.5 H4 V1.2 M2.2 0.5 V3.8 M1.3 3.8 H3.1" fill="none" stroke="#8a8a8a" stroke-width="0.6"/></svg><span class="nm">name</span><span class="ty">string</span></div>
<div class="fi" style="top:248.59px"><svg class="abs" style="left:7.4px;top:2.5px" width="4.2" height="4.2" viewBox="0 0 4.2 4.2"><path d="M1.5 0.3 V3.9 M2.8 0.3 V3.9 M0.3 1.5 H3.9 M0.3 2.8 H3.9" stroke="#8a8a8a" stroke-width="0.65"/></svg><span class="nm">sell</span><span class="ty">number</span></div>
<div class="fi" style="top:257.86px"><svg class="abs" style="left:7.4px;top:2.6px" width="4.4" height="4.2" viewBox="0 0 4.4 4.2"><path d="M0.4 1.2 V0.5 H4 V1.2 M2.2 0.5 V3.8 M1.3 3.8 H3.1" fill="none" stroke="#8a8a8a" stroke-width="0.6"/></svg><span class="nm">where_how</span><span class="ty">string</span></div>
<div class="fi" style="top:267.13px"><svg class="abs" style="left:7.4px;top:2.6px" width="4.4" height="4.2" viewBox="0 0 4.4 4.2"><path d="M0.4 1.2 V0.5 H4 V1.2 M2.2 0.5 V3.8 M1.3 3.8 H3.1" fill="none" stroke="#8a8a8a" stroke-width="0.6"/></svg><span class="nm">shadow</span><span class="ty">string</span></div>
<div class="fi" style="top:276.40px"><svg class="abs" style="left:7.4px;top:2.5px" width="4.2" height="4.2" viewBox="0 0 4.2 4.2"><path d="M1.5 0.3 V3.9 M2.8 0.3 V3.9 M0.3 1.5 H3.9 M0.3 2.8 H3.9" stroke="#8a8a8a" stroke-width="0.65"/></svg><span class="nm">total_catches_to_unlock</span><span class="ty">number</span></div>
<div class="fi" style="top:285.67px"><svg class="abs" style="left:7.4px;top:2.6px" width="4.4" height="4.2" viewBox="0 0 4.4 4.2"><path d="M0.4 1.2 V0.5 H4 V1.2 M2.2 0.5 V3.8 M1.3 3.8 H3.1" fill="none" stroke="#8a8a8a" stroke-width="0.6"/></svg><span class="nm">spawn_rates</span><span class="ty">string</span></div>
<div class="fi" style="top:294.94px"><svg class="abs" style="left:7.4px;top:2.6px" width="4.4" height="4.2" viewBox="0 0 4.4 4.2"><path d="M0.4 1.2 V0.5 H4 V1.2 M2.2 0.5 V3.8 M1.3 3.8 H3.1" fill="none" stroke="#8a8a8a" stroke-width="0.6"/></svg><span class="nm">rain_snow_catch_up</span><span class="ty">string</span></div>
<div class="fi" style="top:304.21px"><svg class="abs" style="left:7.4px;top:2.6px" width="4.4" height="4.2" viewBox="0 0 4.4 4.2"><path d="M0.4 1.2 V0.5 H4 V1.2 M2.2 0.5 V3.8 M1.3 3.8 H3.1" fill="none" stroke="#8a8a8a" stroke-width="0.6"/></svg><span class="nm">nh_jan</span><span class="ty">string</span></div>
<div class="fi" style="top:313.48px"><svg class="abs" style="left:7.4px;top:2.6px" width="4.4" height="4.2" viewBox="0 0 4.4 4.2"><path d="M0.4 1.2 V0.5 H4 V1.2 M2.2 0.5 V3.8 M1.3 3.8 H3.1" fill="none" stroke="#8a8a8a" stroke-width="0.6"/></svg><span class="nm">nh_feb</span><span class="ty">string</span></div>
<div class="fi" style="top:322.75px"><svg class="abs" style="left:7.4px;top:2.6px" width="4.4" height="4.2" viewBox="0 0 4.4 4.2"><path d="M0.4 1.2 V0.5 H4 V1.2 M2.2 0.5 V3.8 M1.3 3.8 H3.1" fill="none" stroke="#8a8a8a" stroke-width="0.6"/></svg><span class="nm">nh_mar</span><span class="ty">string</span></div>
<div class="fi" style="top:332.02px"><svg class="abs" style="left:7.4px;top:2.6px" width="4.4" height="4.2" viewBox="0 0 4.4 4.2"><path d="M0.4 1.2 V0.5 H4 V1.2 M2.2 0.5 V3.8 M1.3 3.8 H3.1" fill="none" stroke="#8a8a8a" stroke-width="0.6"/></svg><span class="nm">nh_apr</span><span class="ty">string</span></div>
<div class="fi" style="top:341.29px"><svg class="abs" style="left:7.4px;top:2.6px" width="4.4" height="4.2" viewBox="0 0 4.4 4.2"><path d="M0.4 1.2 V0.5 H4 V1.2 M2.2 0.5 V3.8 M1.3 3.8 H3.1" fill="none" stroke="#8a8a8a" stroke-width="0.6"/></svg><span class="nm">nh_may</span><span class="ty">string</span></div>
<div class="fi" style="top:350.56px"><svg class="abs" style="left:7.4px;top:2.6px" width="4.4" height="4.2" viewBox="0 0 4.4 4.2"><path d="M0.4 1.2 V0.5 H4 V1.2 M2.2 0.5 V3.8 M1.3 3.8 H3.1" fill="none" stroke="#8a8a8a" stroke-width="0.6"/></svg><span class="nm">nh_jun</span><span class="ty">string</span></div>
<div class="fi" style="top:359.83px"><svg class="abs" style="left:7.4px;top:2.6px" width="4.4" height="4.2" viewBox="0 0 4.4 4.2"><path d="M0.4 1.2 V0.5 H4 V1.2 M2.2 0.5 V3.8 M1.3 3.8 H3.1" fill="none" stroke="#8a8a8a" stroke-width="0.6"/></svg><span class="nm">nh_jul</span><span class="ty">string</span></div>
<div class="fi" style="top:369.10px"><svg class="abs" style="left:7.4px;top:2.6px" width="4.4" height="4.2" viewBox="0 0 4.4 4.2"><path d="M0.4 1.2 V0.5 H4 V1.2 M2.2 0.5 V3.8 M1.3 3.8 H3.1" fill="none" stroke="#8a8a8a" stroke-width="0.6"/></svg><span class="nm">nh_aug</span><span class="ty">string</span></div>
<div class="fi" style="top:378.37px"><svg class="abs" style="left:7.4px;top:2.6px" width="4.4" height="4.2" viewBox="0 0 4.4 4.2"><path d="M0.4 1.2 V0.5 H4 V1.2 M2.2 0.5 V3.8 M1.3 3.8 H3.1" fill="none" stroke="#8a8a8a" stroke-width="0.6"/></svg><span class="nm">nh_sep</span><span class="ty">string</span></div>
<div class="abs" style="left:92px;top:357.6px;width:20.4px;height:20.4px;border-radius:50%;background:#0c3d2c;box-shadow:0 1px 5px rgba(0,0,0,.22)"></div>
<svg class="abs" style="left:96.6px;top:362px" width="12" height="12" viewBox="0 0 12 12"><circle cx="5" cy="5" r="3.4" fill="none" stroke="#fff" stroke-width="0.9"/><path d="M7.5 7.5 L10.4 10.4" stroke="#fff" stroke-width="1.3" stroke-linecap="round"/><path d="M3.6 5.8 Q5 6.8 6.4 5.8" stroke="#fff" stroke-width="0.5" fill="none"/></svg>
</div>
</div></body></html>
